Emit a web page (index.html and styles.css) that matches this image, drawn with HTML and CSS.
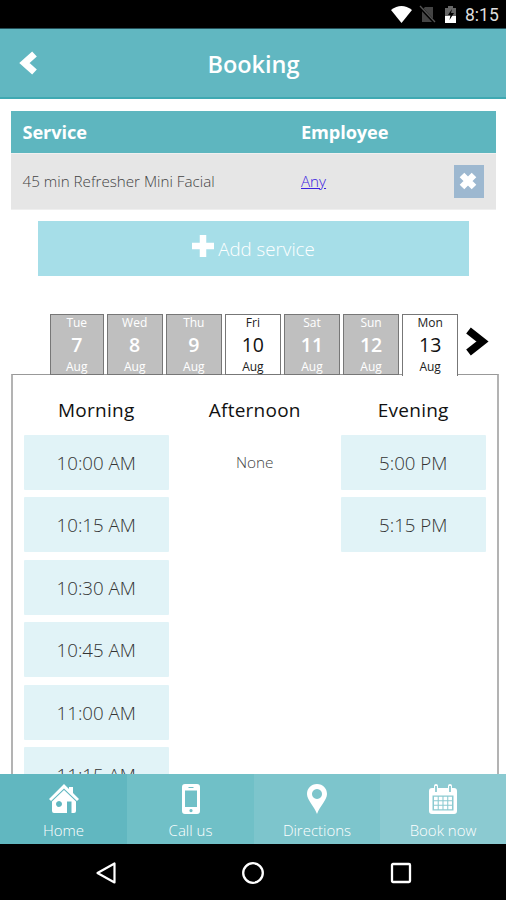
FILE: index.html
```html
<!DOCTYPE html>
<html lang="en">
<head>
<meta charset="utf-8">
<title>Booking</title>
<link rel="stylesheet" href="styles.css">
</head>
<body>
<div class="screen">
  <div class="status">
    <svg class="status-icons" viewBox="0 0 70 28" width="70" height="28">
      <path d="M1 10Q11.500 2 22 10L11.500 23Z" fill="#fff"/>
      <path d="M35 7h8v15h-11V10z" fill="#444"/>
      <path d="M30 7l15 16" stroke="#000" stroke-width="3"/>
      <path d="M30 6l15 16" stroke="#555" stroke-width="1.300"/>
      <path d="M58 6h5v2h3v15H55V8h3z" fill="#666"/>
      <path d="M55 16h11v7H55z" fill="#fff"/>
      <path d="M62 9l-4 6h2.500l-1 5 4.500-7h-3z" fill="#000"/>
    </svg>
    <span class="clock">8:15</span>
  </div>
  <header class="header">
    <svg class="back" viewBox="0 0 20 24" width="20" height="24"><path d="M15.500 3L5.500 12L15.500 21" fill="none" stroke="#fff" stroke-width="7"/></svg>
    <h1>Booking</h1>
  </header>
  <main class="content">
    <div class="services">
      <div class="row head"><span>Service</span><span>Employee</span></div>
      <div class="row item">
        <span>45 min Refresher Mini Facial</span><a>Any</a>
        <button class="remove"><svg viewBox="0 0 18 18" width="18" height="18"><path d="M3 3L15 15M15 3L3 15" stroke="#fff" stroke-width="6.500"/></svg></button>
      </div>
    </div>
    <button class="add"><svg viewBox="0 0 22 22" width="22" height="22"><path d="M11 0V22M0 11H22" stroke="#fff" stroke-width="6.500"/></svg><span>Add service</span></button>
    <div class="days">
      <div class="day narrow"><span>Tue</span><b>7</b><span>Aug</span></div>
      <div class="day"><span>Wed</span><b>8</b><span>Aug</span></div>
      <div class="day"><span>Thu</span><b>9</b><span>Aug</span></div>
      <div class="day open"><span>Fri</span><b>10</b><span>Aug</span></div>
      <div class="day"><span>Sat</span><b>11</b><span>Aug</span></div>
      <div class="day"><span>Sun</span><b>12</b><span>Aug</span></div>
      <div class="day open selected"><span>Mon</span><b>13</b><span>Aug</span></div>
      <svg class="next" viewBox="0 0 24 30" width="24" height="30"><path d="M3.500 3.500L17.500 14.500L3.500 25.500" fill="none" stroke="#000" stroke-width="7.500"/></svg>
    </div>
    <div class="times">
      <section><h2>Morning</h2>
        <div class="slot">10:00 AM</div><div class="slot">10:15 AM</div><div class="slot">10:30 AM</div>
        <div class="slot">10:45 AM</div><div class="slot">11:00 AM</div><div class="slot">11:15 AM</div>
      </section>
      <section><h2>Afternoon</h2><p>None</p></section>
      <section><h2>Evening</h2><div class="slot">5:00 PM</div><div class="slot">5:15 PM</div></section>
    </div>
  </main>
  <nav class="nav">
    <div class="tab home">
      <svg viewBox="0 0 30 30" width="30" height="30"><path fill="#fff" fill-rule="evenodd" d="M15 0L20 5V3h4v6l6 6-2 2L15 4.500 2 17 0 15zM15 6L27 17.500v9.500q0 2-2 2h-2.500V17.500h-4.500V29H5q-2 0-2-2V17.500zM10 17a3 3 0 1 0 .01 0z"/></svg>
      <span>Home</span>
    </div>
    <div class="tab call">
      <svg viewBox="0 0 30 30" width="30" height="30"><path fill="#fff" fill-rule="evenodd" d="M9 0h12q3 0 3 3v24q0 3-3 3H9q-3 0-3-3V3q0-3 3-3zM9 6.500V23h12V6.500zM12.500 3v1h5V3zM15 25a1.600 1.600 0 1 0 .01 0z"/></svg>
      <span>Call us</span>
    </div>
    <div class="tab directions">
      <svg viewBox="0 0 30 30" width="30" height="30"><path fill="#fff" fill-rule="evenodd" d="M15 0C9 0 5 4.500 5 10C5 16 12 22 15 30C18 22 25 16 25 10C25 4.500 21 0 15 0zM15 5a5 5 0 1 0 .01 0z"/></svg>
      <span>Directions</span>
    </div>
    <div class="tab book">
      <svg viewBox="0 0 30 30" width="30" height="30">
        <path fill="#fff" fill-rule="evenodd" d="M4 4h2V2q0-2 2-2t2 2v2h10V2q0-2 2-2t2 2v2h2q3 0 3 3v20q0 3-3 3H4q-3 0-3-3V7q0-3 3-3zM4.500 11.500V26.500h21V11.500z"/>
        <path d="M8 2v6M22 2v6" stroke="#8bcad1" stroke-width="1.800"/>
        <path d="M6 14.500h18M6 19h18M6 23.500h18" stroke="#fff" stroke-width="3.600" stroke-dasharray="3.700 1.060"/>
      </svg>
      <span>Book now</span>
    </div>
  </nav>
  <footer class="system">
    <svg class="sys-back" viewBox="0 0 24 24" width="24" height="24"><path d="M19.500 2.500V21.500L2.500 12z" fill="none" stroke="#fff" stroke-width="2.200" stroke-linejoin="round"/></svg>
    <svg viewBox="0 0 24 24" width="24" height="24"><circle cx="12" cy="12" r="9.800" fill="none" stroke="#fff" stroke-width="2.300"/></svg>
    <svg viewBox="0 0 24 24" width="24" height="24"><rect x="3" y="3" width="18" height="18" rx="1" fill="none" stroke="#fff" stroke-width="2.300"/></svg>
  </footer>
</div>
</body>
</html>
```

FILE: styles.css
```css
* { box-sizing: border-box; }
body { margin: 0; background: #fff; font-family: "Open Sans", sans-serif; font-weight: 300; }
h1, h2, p { margin: 0; }
button { border: 0; padding: 0; font: inherit; }
svg { display: block; flex: none; }
.screen { width: 506px; height: 900px; display: flex; flex-direction: column; overflow: hidden; }
.status { height: 29px; flex: none; background: #000; display: flex; justify-content: flex-end; padding-right: 9px; border-bottom: 1px solid #245059; }
.status-icons { margin-right: 5px; }
.clock { width: 32px; font: 400 17.500px/30px Roboto, sans-serif; color: #ddd; white-space: nowrap; }
.header { height: 70px; flex: none; background: #61b7c1; border-bottom: 2px solid #3fa9b2; display: flex; align-items: center; }
.back { margin-left: 19px; }
h1 { flex: 1; margin-right: 38px; padding-top: 2px; text-align: center; color: #fff; font-size: 23.500px; line-height: 32px; font-weight: 600; }
.content { flex: 1; min-height: 0; overflow: hidden; padding: 12px 7px 0 11px; }
.services { width: 485px; }
.row { display: grid; grid-template-columns: 278.500px 152.500px 30px; align-items: center; padding-left: 11.500px; }
.head { height: 42px; background: #5eb6bf; color: #fff; font-size: 18.200px; font-weight: 700; letter-spacing: -0.1px; }
.item { height: 57px; padding-bottom: 1px; background: #e6e6e6; border-top: 1px solid #f0f0f0; border-bottom: 1px solid #efefef; color: #444; font-size: 15.200px; }
.item a { color: #3a22e0; text-decoration: underline; }
.remove { width: 30px; height: 33px; background: #9db8d0; display: grid; place-items: center; }
.remove svg { margin-right: 2px; }
.add { margin: 11px 0 0 27px; width: 431px; height: 55px; background: #a6dee8; color: #fff; font-size: 18.700px; display: flex; justify-content: center; align-items: center; gap: 4px; }
.add svg { margin-bottom: 5px; }
.days { display: flex; gap: 3.300px; margin: 38px 0 -2px 39px; height: 62px; position: relative; }
.day { width: 55.800px; height: 61px; padding-top: 1px; background: #bfbfbf; border: 1px solid #777; color: #fff; display: flex; flex-direction: column; align-items: center; font-size: 12px; line-height: 13px; font-weight: 500; }
.day.narrow { width: 53.500px; }
.day b { font-size: 19.500px; line-height: 31px; font-weight: 600; }
.day.open { background: #fff; color: #222; font-weight: 400; }
.day.open b { color: #111; font-weight: 500; }
.day.selected { height: 62px; border-bottom: 0; }
.next { margin: 13px 0 0 4px; }
.times { border: 2px solid #b3b3b3; border-top: 1px solid #999; height: 420px; padding: 21px 11px 0; display: grid; grid-template-columns: repeat(3, 144.500px); gap: 14px; text-align: center; }
h2 { font-size: 19px; line-height: 28px; font-weight: 500; letter-spacing: 0.25px; color: #111; margin-bottom: 11px; }
.slot { height: 55px; margin-bottom: 7.400px; background: #e1f3f7; border-radius: 1px; color: #333; font-size: 18.700px; line-height: 56px; }
.times p { font-size: 15.400px; line-height: 55px; color: #444; }
.nav { height: 70px; flex: none; display: grid; grid-template-columns: 127px 127px 126px 126px; }
.tab { display: flex; flex-direction: column; align-items: center; padding-top: 10px; color: #fff; font-size: 15px; line-height: 20px; gap: 6px; }
.home { background: #61b7c0; }
.call { background: #70c0c7; }
.directions { background: #7dc5cc; }
.book { background: #8bcad1; }
.system { height: 56px; flex: none; background: #000; display: flex; justify-content: center; align-items: center; gap: 124px; padding-top: 1px; }
.sys-back { margin: 0 -2px 0 2px; }
```
